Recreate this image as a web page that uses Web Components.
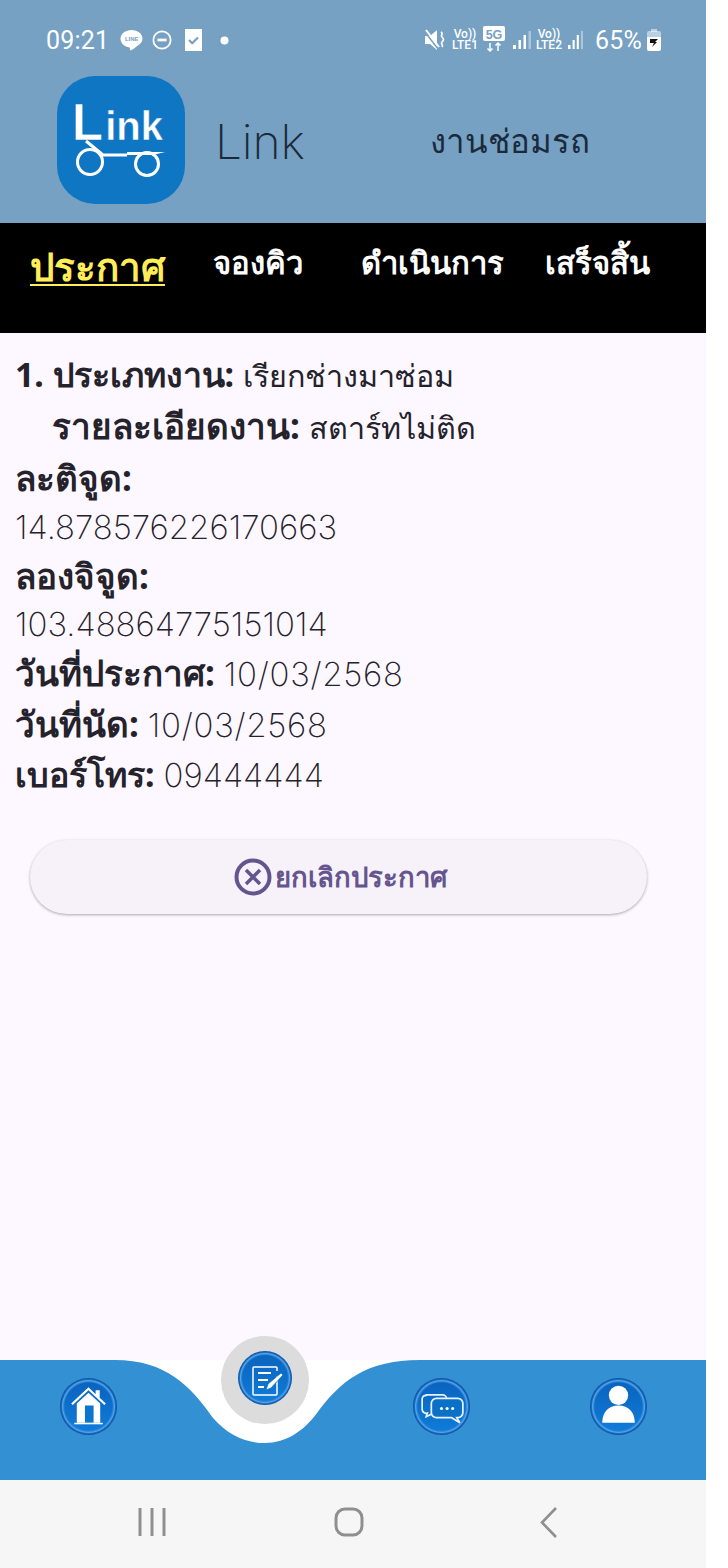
<!DOCTYPE html>
<html lang="th">
<head>
<meta charset="utf-8">
<title>Link</title>
<style>
  html, body { margin: 0; padding: 0; background: #fff; }
  body { width: 728px; height: 1568px; overflow: hidden; font-family: Inter, "Noto Sans", sans-serif; }
</style>
</head>
<body>
<app-shell>
  <status-bar></status-bar>
  <app-header></app-header>
  <tab-bar>
    <tab-item active>ประกาศ</tab-item>
    <tab-item>จองคิว</tab-item>
    <tab-item>ดำเนินการ</tab-item>
    <tab-item>เสร็จสิ้น</tab-item>
  </tab-bar>
  <job-list>
    <info-row thai style="--h:52px;--label-size:33.800px" label="1. ประเภทงาน:">เรียกช่างมาซ่อม</info-row>
    <info-row thai style="--h:52px;--indent:37px" label="รายละเอียดงาน:">สตาร์ทไม่ติด</info-row>
    <info-row style="--h:52px" label="ละติจูด:"></info-row>
    <info-row style="--h:46px">14.878576226170663</info-row>
    <info-row style="--h:52px" label="ลองจิจูด:"></info-row>
    <info-row style="--h:45px">103.48864775151014</info-row>
    <info-row date style="--h:51px" label="วันที่ประกาศ:">10/03/2568</info-row>
    <info-row date style="--h:51px" label="วันที่นัด:">10/03/2568</info-row>
    <info-row style="--h:51px;--label-size:34px" label="เบอร์โทร:">09444444</info-row>
    <cancel-button>ยกเลิกประกาศ</cancel-button>
  </job-list>
  <bottom-nav></bottom-nav>
  <system-nav></system-nav>
</app-shell>

<script>
class AppShell extends HTMLElement {
  connectedCallback() {
    this.attachShadow({ mode: 'open' });
    this.shadowRoot.innerHTML = `
      <style>
        :host { display: flex; flex-direction: column; width: 706px; height: 1568px; background: #fdf7ff; }
      </style>
      <slot></slot>
    `;
  }
}

class StatusBar extends HTMLElement {
  connectedCallback() {
    const signal = `<rect x="0" y="15" width="3" height="4"/><rect x="5.500" y="10" width="2.500" height="9"/><rect x="10.500" y="5" width="2.500" height="14"/><rect x="15.500" y="1" width="2.500" height="18" opacity=".4"/>`;
    this.attachShadow({ mode: 'open' });
    this.shadowRoot.innerHTML = `
      <style>
        :host { display: flex; align-items: center; justify-content: space-between; height: 80px; padding: 0 45px 0 46px; color: #fff; font-family: Roboto, sans-serif; background: #76a1c2; }
        .side { display: flex; align-items: center; }
        .big { font-size: 25px; letter-spacing: .2px; }
        svg { display: block; }
        .line { position: relative; width: 23px; height: 23px; margin-left: 11px; }
        .line b { position: absolute; left: 0; right: 0; top: 6px; text-align: center; font: 700 6px/8px "Liberation Sans", sans-serif; color: #76a1c2; }
        .vo { width: 26px; font: 500 12px/11px Roboto, sans-serif; text-align: center; }
        .fg { font: 700 12.500px "Liberation Sans", sans-serif; fill: #76a1c2; }
      </style>
      <div class="side">
        <span class="big">09:21</span>
        <span class="line">
          <svg width="23" height="23" viewBox="0 0 23 23"><path d="M11.500 1C5.400 1 .5 4.900 .5 9.800c0 4.400 3.800 8 9 8.700.5.100.6 2.600 1 3 .6.300 6-3.500 8-5.400 2.400-1.900 4-3.700 4-6.300C22.500 4.900 17.600 1 11.500 1Z" fill="#fff"/></svg>
          <b>LINE</b>
        </span>
        <svg style="margin-left:9px" width="20" height="20" viewBox="0 0 22 22" fill="none" stroke="#fff" stroke-width="2"><circle cx="11" cy="11" r="9.500"/><path d="M6 11h10" stroke-width="3"/></svg>
        <svg style="margin-left:13px" width="17" height="22" viewBox="0 0 17 22"><path d="M0 0h17v22H0Z" fill="#fff"/><path d="M4 11l3.200 3.200 5.800-5.700" fill="none" stroke="#76a1c2" stroke-width="2.200"/></svg>
        <svg style="margin-left:18px" width="9" height="9" viewBox="0 0 9 9"><circle cx="4.500" cy="4.500" r="4" fill="#fff"/></svg>
      </div>
      <div class="side">
        <svg width="21" height="22" viewBox="0 0 21 22"><path d="M0 7h5l7-6v20l-7-6H0Z" fill="#fff"/><path d="M0 3l13 17" stroke="#76a1c2" stroke-width="1.500"/><path d="M1 1l13 17" stroke="#fff" stroke-width="2"/><path d="M16 3c3 2-1 3 1 5s2 3 0 5 2 3 0 5" fill="none" stroke="#fff" stroke-width="1.700"/></svg>
        <span class="vo" style="margin-left:6px">Vo))<br>LTE1</span>
        <svg style="margin-left:5px;margin-top:-3px" width="22" height="26" viewBox="0 0 22 26"><path d="M2 0h18a2 2 0 0 1 2 2v11a2 2 0 0 1-2 2H2a2 2 0 0 1-2-2V2a2 2 0 0 1 2-2Z" fill="#fff"/><text class="fg" x="11" y="12.500" text-anchor="middle">5G</text><path d="M7 17v8M4.500 22.500 7 25l2.500-2.500M15 25v-8M12.500 19.500 15 17l2.500 2.500" fill="none" stroke="#fff" stroke-width="1.500"/></svg>
        <svg style="margin-left:8px" width="18" height="20" viewBox="0 0 18 20" fill="#fff">${signal}</svg>
        <span class="vo" style="margin-left:5px">Vo))<br>LTE2</span>
        <svg style="margin-left:6px" width="15" height="20" viewBox="0 0 18 20" preserveAspectRatio="none" fill="#fff">${signal}</svg>
        <span class="big" style="margin-left:12px">65%</span>
        <svg style="margin-left:5px" width="14" height="22" viewBox="0 0 14 22"><path d="M4 0h6v3H4Z" fill="#fff" opacity=".5"/><rect y="2" width="14" height="7" rx="2" fill="#fff" opacity=".5"/><path d="M0 8h14v12a2 2 0 0 1-2 2H2a2 2 0 0 1-2-2Z" fill="#fff"/><path d="M3 10h8l-3 3h2l-5 5 2-4H3Z" fill="#111"/></svg>
      </div>
    `;
  }
}

class AppHeader extends HTMLElement {
  connectedCallback() {
    this.attachShadow({ mode: 'open' });
    this.shadowRoot.innerHTML = `
      <style>
        :host { display: flex; align-items: flex-start; height: 143px; background: #76a1c2; color: #1a2a3c; }
        .logo { width: 128px; height: 128px; margin: -4px 0 0 57px; flex: none; }
        .name { margin: 35px 0 0 30px; width: 215px; font: 200 48px/54px Inter, sans-serif; letter-spacing: -.2px; }
        .job { margin-top: 37px; font-size: 33px; line-height: 48px; font-family: "Noto Sans", sans-serif; font-weight: 400; }
        text { font-family: "Liberation Sans", sans-serif; font-weight: 700; fill: #fff; stroke: #0f76c4; stroke-width: .5px; }
      </style>
      <svg class="logo" viewBox="0 0 128 128">
        <rect width="128" height="128" rx="38" fill="#0f76c4"/>
        <text x="15" y="64" font-size="51">L<tspan font-size="40" dx="2">ink</tspan></text>
        <g fill="none" stroke="#fff" stroke-width="3">
          <circle cx="33" cy="86" r="12.500"/>
          <circle cx="90" cy="88" r="11.500"/>
          <path d="M29 65l17 14h24" />
        </g>
        <path d="M70 76h38l-12 3H70Z" fill="#fff"/>
      </svg>
      <span class="name">Link</span>
      <span class="job">งานช่อมรถ</span>
    `;
  }
}

class TabBar extends HTMLElement {
  connectedCallback() {
    this.attachShadow({ mode: 'open' });
    this.shadowRoot.innerHTML = `
      <style>
        :host { display: grid; grid-template-columns: 183px 148px 184px 1fr; align-items: start; height: 110px; padding-left: 30px; box-sizing: border-box; background: #000; }
      </style>
      <slot></slot>
    `;
  }
}

class TabItem extends HTMLElement {
  connectedCallback() {
    this.attachShadow({ mode: 'open' });
    this.shadowRoot.innerHTML = `
      <style>
        :host { display: block; padding-top: 15px; color: #fff; font: 600 31px/48px "Noto Sans", sans-serif; white-space: nowrap; }
        :host([active]) { padding-top: 16px; color: #ffee58; font-size: 38.500px; line-height: 54px; text-decoration: underline; text-decoration-thickness: 2px; text-underline-offset: 3px; }
      </style>
      <slot></slot>
    `;
  }
}

class JobList extends HTMLElement {
  connectedCallback() {
    this.attachShadow({ mode: 'open' });
    this.shadowRoot.innerHTML = `
      <style>
        :host { display: block; flex: 1; min-height: 0; padding: 15px 0 0 15px; color: #24222a; }
      </style>
      <slot></slot>
    `;
  }
}

class InfoRow extends HTMLElement {
  connectedCallback() {
    this.attachShadow({ mode: 'open' });
    const label = this.getAttribute('label');
    this.shadowRoot.innerHTML = `
      <style>
        :host { display: block; height: var(--h, 50px); padding-left: var(--indent, 0); font: 200 33px/var(--h, 50px) Inter, "Noto Sans", sans-serif; white-space: nowrap; }
        :host([thai]) { font-size: 30.500px; font-family: "Noto Sans", sans-serif; font-weight: 300; }
        :host([date]) { letter-spacing: .7px; }
        b { font-weight: 700; font-family: "Noto Sans", sans-serif; margin-right: 9px; font-size: var(--label-size, 35px); letter-spacing: 0; }
      </style>
      ${label ? `<b>${label}</b>` : ''}<slot></slot>
    `;
  }
}

class CancelButton extends HTMLElement {
  connectedCallback() {
    this.attachShadow({ mode: 'open' });
    this.shadowRoot.innerHTML = `
      <style>
        :host { display: flex; align-items: center; justify-content: center; gap: 3px; box-sizing: border-box; width: 617px; height: 74px; margin: 40px 0 0 15px; padding-left: 3px; border-radius: 37px; background: #f7f2fa; color: #65558f; box-shadow: 0 1px 3px rgba(0,0,0,.32); font: 600 27.500px/40px "Noto Sans", sans-serif; }
      </style>
      <svg width="38" height="38" viewBox="0 0 38 38" fill="none" stroke="#65558f" stroke-width="4"><circle cx="19" cy="19" r="16.500"/><path d="M12 12l14 14M26 12 12 26" stroke-width="3.500"/></svg>
      <slot></slot>
    `;
  }
}

class RoundBadge extends HTMLElement {
  connectedCallback() {
    this.attachShadow({ mode: 'open' });
    this.shadowRoot.innerHTML = `
      <style>
        :host { display: block; box-sizing: border-box; width: var(--size, 57px); height: var(--size, 57px); border-radius: 50%; background: radial-gradient(circle closest-side, transparent 0 83%, #2b88d8 87%, #5aa4e6 91%, #1668bf 95%, #0b4f9c 100%), linear-gradient(#0a62bb, #0f7ddb); overflow: hidden; }
        ::slotted(svg) { display: block; width: 100%; height: 100%; }
      </style>
      <slot></slot>
    `;
  }
}

class BottomNav extends HTMLElement {
  connectedCallback() {
    this.attachShadow({ mode: 'open' });
    this.shadowRoot.innerHTML = `
      <style>
        :host { display: block; position: relative; height: 120px; flex: none; }
        .wave { display: block; position: absolute; inset: 0; }
        .items { position: relative; display: grid; grid-template-columns: 60px 353px 177px 1fr; padding-top: 18px; }
        .fab { position: absolute; left: 221px; top: -24px; width: 88px; height: 88px; border-radius: 50%; background: #dcdcdc; display: flex; justify-content: center; padding-top: 15px; box-sizing: border-box; }
        .fab round-badge { --size: 54px; }
        .items round-badge:nth-child(1) { grid-column: 2; }
      </style>
      <svg class="wave" width="706" height="120" viewBox="0 0 706 120">
        <rect width="706" height="120" fill="#fff"/>
        <path d="M0 0H115C165 0 190 25 213 58C228 75 245 83 265 83C285 83 303 72 317 53C340 22 365 0 420 0H706V120H0Z" fill="#3390d2"/>
      </svg>
      <div class="items">
        <round-badge>
          <svg viewBox="0 0 56 56"><path d="M28 9 11 25l1.500 1.500L28 12l15.500 14.500L45 25l-6-5.500V12h-4v4Z" fill="#fff"/><path d="M28 14.500 16.500 25v19h23V25Z" fill="#fff"/><rect x="24.500" y="27" width="8.500" height="17" fill="#0b76d0"/><rect x="14" y="44" width="28" height="1.500" fill="#fff"/></svg>
        </round-badge>
        <round-badge>
          <svg viewBox="0 0 56 56" fill="none" stroke="#e6f3ff" stroke-width="1.700"><path d="M13 16.500h16a4 4 0 0 1 4 4V31a4 4 0 0 1-4 4H19l-6 3 1-3.500a4 4 0 0 1-5-3.500V20.500a4 4 0 0 1 4-3.500Z"/><path d="M23 20h21a5 5 0 0 1 5 5v9a5 5 0 0 1-5 5h-1l3 5-8-5H23a5 5 0 0 1-5-5v-9a5 5 0 0 1 5-5Z" fill="#0b70c8"/><g fill="#fff" stroke="none"><circle cx="28" cy="30" r="1.500"/><circle cx="33.500" cy="30" r="1.500"/><circle cx="39" cy="30" r="1.500"/></g></svg>
        </round-badge>
        <round-badge>
          <svg viewBox="0 0 56 56" fill="#fff"><circle cx="28" cy="17" r="9.500"/><path d="M12 44c0-10 6-17 16-17s16 7 16 17Z"/></svg>
        </round-badge>
      </div>
      <div class="fab">
        <round-badge>
          <svg viewBox="0 0 54 54" fill="none" stroke="#fff" stroke-width="1.500"><path d="M39 25v18a1 1 0 0 1-1 1H16a1 1 0 0 1-1-1V17a1 1 0 0 1 1-1h22a1 1 0 0 1 1 1v3"/><path d="M20 22h13M20 29h10M20 36h6" stroke-width="2"/><path d="M28 39l2-6 13-11 2 2-12 13Z" fill="#fff" stroke="#0b70c8" stroke-width=".8"/></svg>
        </round-badge>
      </div>
    `;
  }
}

class SystemNav extends HTMLElement {
  connectedCallback() {
    this.attachShadow({ mode: 'open' });
    this.shadowRoot.innerHTML = `
      <style>
        :host { display: grid; grid-template-columns: 138px 196px 204px auto; align-items: center; box-sizing: border-box; height: 88px; flex: none; padding-bottom: 4px; background: #f6f6f6; }
        svg { display: block; grid-row: 1; }
      </style>
      <svg style="grid-column:2" width="30" height="30" viewBox="0 0 30 30" fill="none" stroke="#8f8f8f" stroke-width="3"><path d="M2 1v28M14 1v28M26 1v28"/></svg>
      <svg style="grid-column:3" width="30" height="30" viewBox="0 0 30 30" fill="none" stroke="#8f8f8f" stroke-width="3"><rect x="2" y="2" width="26" height="26" rx="9"/></svg>
      <svg style="grid-column:4;margin-left:2px" width="17" height="31" viewBox="0 0 17 31" fill="none" stroke="#8f8f8f" stroke-width="2.600"><path d="M16 1 2 15.500 16 30"/></svg>
    `;
  }
}

customElements.define('app-shell', AppShell);
customElements.define('status-bar', StatusBar);
customElements.define('app-header', AppHeader);
customElements.define('tab-bar', TabBar);
customElements.define('tab-item', TabItem);
customElements.define('job-list', JobList);
customElements.define('info-row', InfoRow);
customElements.define('cancel-button', CancelButton);
customElements.define('round-badge', RoundBadge);
customElements.define('bottom-nav', BottomNav);
customElements.define('system-nav', SystemNav);
</script>
</body>
</html>
